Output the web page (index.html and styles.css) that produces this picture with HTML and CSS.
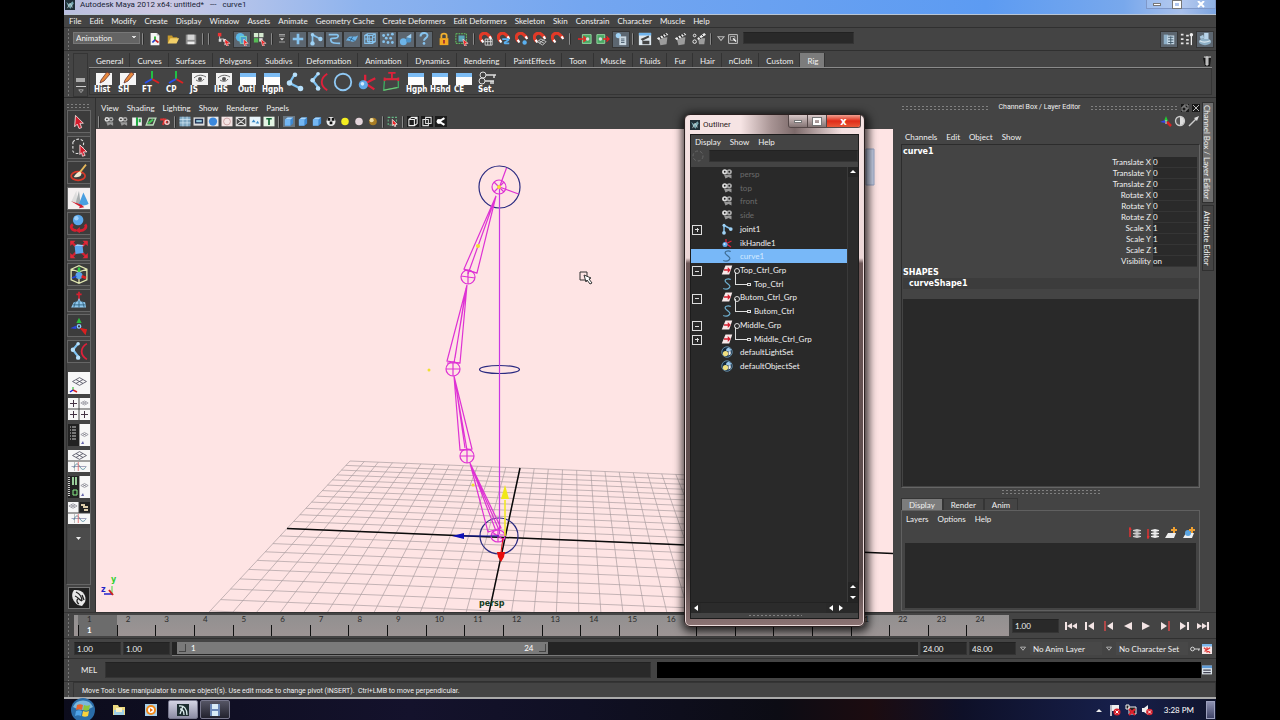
FILE: index.html
```html
<!DOCTYPE html>
<html lang="en">
<head>
<meta charset="utf-8">
<title>Autodesk Maya 2012 x64: untitled*</title>
<link rel="stylesheet" href="styles.css">
</head>
<body>
<svg class="sprite" aria-hidden="true">
  <symbol id="new" viewBox="0 0 16 16"><path d="M3 1h7l3 3v11H3z" fill="#f4f4f4"/><path d="M10 1v3h3" fill="#bbb"/><path d="M8 9V5" stroke="#2a2" stroke-width="2"/><path d="M8 9l4 3" stroke="#c22" stroke-width="2"/><path d="M8 9l-3 3" stroke="#24c" stroke-width="2"/></symbol>
  <symbol id="open" viewBox="0 0 16 16"><path d="M2 13V4h5l1 2h5v2" fill="#c79a2c"/><path d="M2 13l3-6h10l-3 6z" fill="#f3d069"/></symbol>
  <symbol id="save" viewBox="0 0 16 16"><path d="M2 3h12v11H2z" fill="#8b8b8b"/><path d="M4 3h8v6H4z" fill="#d5d5d5"/><path d="M4 11h8v3H4z" fill="#eee"/></symbol>
  <symbol id="sel-h" viewBox="0 0 16 16"><path d="M1 1h4v4H1z" fill="#e33"/><path d="M2 8h3v3H2zM7 8h3v3H7z" fill="#ddd"/><path d="M3 5v3h5" stroke="#ccc" fill="none"/><path d="M9 8l6 5-3 0 1 3-2 0-1-3-1 2z" fill="#e22" stroke="#fff" stroke-width=".6"/></symbol>
  <symbol id="sel-o" viewBox="0 0 16 16"><circle cx="6" cy="6" r="5" fill="#5ab8e8"/><path d="M6 5h7v8H6z" fill="#4a9fd0" stroke="#7fe0c0"/><path d="M10 8l5 5-3 0 1 3-2 0-1-3z" fill="#e22" stroke="#fff" stroke-width=".6"/></symbol>
  <symbol id="sel-c" viewBox="0 0 16 16"><path d="M1 1h5v5H1zM7 1h5v5H7z" fill="#d6ead0"/><path d="M1 7h5v5H1z" fill="#5b5"/><path d="M7 7h4v4H7z" fill="#ddd"/><path d="M9 8l6 5-3 0 1 3-2 0-1-3z" fill="#e22" stroke="#fff" stroke-width=".6"/></symbol>
  <symbol id="drop" viewBox="0 0 16 16"><path d="M4 2h8M4 4h8M4 12h8" stroke="#bbb"/><path d="M5 7h6l-3 3z" fill="#ddd"/></symbol>
  <symbol id="plus" viewBox="0 0 16 16"><path d="M8 2v12M2 8h12" stroke="#86c3ee" stroke-width="3"/></symbol>
  <symbol id="m-joint" viewBox="0 0 16 16"><path d="M4 13V3l9 5" stroke="#86c3ee" stroke-width="2" fill="none"/><circle cx="4" cy="3" r="2" fill="#9fd2f5"/><circle cx="4" cy="13" r="2.500" fill="#9fd2f5"/><circle cx="13" cy="8" r="2.500" fill="#9fd2f5"/></symbol>
  <symbol id="m-curve" viewBox="0 0 16 16"><path d="M2 3h9c3 0 2 4-1 4-5 0-7 0-5 4 1 2 5 2 10 2" stroke="#86c3ee" stroke-width="2" fill="none"/></symbol>
  <symbol id="m-surf" viewBox="0 0 16 16"><path d="M1 10c3-5 4-5 6-5s4 1 8-1c-2 5-3 7-6 7s-5-2-8-1z" fill="#6db4e8"/><path d="M4 7l7 3M9 5L6 10" stroke="#2d5f86"/></symbol>
  <symbol id="m-lat" viewBox="0 0 16 16"><path d="M2 4h9v9H2zM5 2h9v9H5zM2 8h9M7 4v9M11 6h3M5 2L2 4M14 2l-3 2M14 11l-3 2" stroke="#86c3ee" fill="none" stroke-width="1.300"/></symbol>
  <symbol id="m-dyn" viewBox="0 0 16 16"><g fill="#86c3ee"><circle cx="3" cy="4" r="1.600"/><circle cx="8" cy="3" r="1.400"/><circle cx="13" cy="2.500" r="1.600"/><circle cx="6" cy="7" r="1.600"/><circle cx="11" cy="7" r="1.600"/><circle cx="3" cy="11" r="1.600"/><circle cx="8" cy="12" r="1.600"/><circle cx="13" cy="12" r="1.600"/></g></symbol>
  <symbol id="m-ren" viewBox="0 0 16 16"><circle cx="5" cy="11" r="4" fill="#6db4e8"/><circle cx="11" cy="9" r="3" fill="#4d93c8"/><path d="M8 6l6-4v5z" fill="#9fd2f5"/></symbol>
  <symbol id="m-q" viewBox="0 0 16 16"><path d="M4 5c0-5 8-5 8-1 0 3-4 3-4 6" stroke="#86c3ee" stroke-width="2.200" fill="none"/><circle cx="8" cy="13" r="1.500" fill="#86c3ee"/></symbol>
  <symbol id="lock" viewBox="0 0 16 16"><path d="M5 7V4c0-3 6-3 6 0v3" stroke="#f0b030" stroke-width="2" fill="none"/><path d="M3 7h10v8H3z" fill="#f2a822"/><path d="M8 9v4" stroke="#803" stroke-width="1.500"/></symbol>
  <symbol id="hilite" viewBox="0 0 16 16"><path d="M1 2h12v11H1z" fill="none" stroke="#6d6" stroke-dasharray="2 1"/><path d="M4 4h7v7H4z" fill="#5aa7b8"/><path d="M9 8l6 5-3 0 1 3-2 0-1-3z" fill="#e22" stroke="#fff" stroke-width=".6"/></symbol>
  <symbol id="mag" viewBox="0 0 16 16"><path d="M4 11L2 8C0 3 6-1 10 3l4 4" stroke="#e23a28" stroke-width="3.500" fill="none"/><path d="M3 9l2 3M12 5l2 3" stroke="#fff" stroke-width="2.500"/></symbol>
  <symbol id="grid" viewBox="0 0 16 16"><path d="M7 8h8v7H7zM7 11h8M10 8v7M13 8v7" stroke="#ddd" fill="none"/></symbol>
  <symbol id="cplay" viewBox="0 0 16 16"><path d="M6 8h7c2 2-6 3-4 5h5" stroke="#5ab0f0" stroke-width="2" fill="none"/></symbol>
  <symbol id="dot" viewBox="0 0 16 16"><circle cx="11" cy="12" r="2.500" fill="#5ab0f0"/></symbol>
  <symbol id="plane" viewBox="0 0 16 16"><path d="M5 11l4-3 6 3-4 4z M7 10l6 3M7 13l5-4" stroke="#ccc" fill="none"/></symbol>
  <symbol id="hin" viewBox="0 0 16 16"><path d="M5 3h10v10H5z" fill="#4aa865" stroke="#9be0a8"/><path d="M0 8h8M6 5l4 3-4 3" stroke="#e22" stroke-width="1.600" fill="none"/><circle cx="11" cy="8" r="2" fill="#ddd"/></symbol>
  <symbol id="hout" viewBox="0 0 16 16"><path d="M1 3h9v10H1z" fill="#4aa865" stroke="#9be0a8"/><circle cx="5" cy="8" r="2" fill="#ddd"/><path d="M8 8h7M12 5l3 3-3 3" stroke="#e22" stroke-width="1.600" fill="none"/></symbol>
  <symbol id="hist" viewBox="0 0 16 16"><circle cx="5" cy="4" r="3" fill="#9fd2f5"/><path d="M6 5h8v10H6z" fill="#c8d6e0"/><path d="M8 8h4M8 10h4M8 12h4" stroke="#456"/></symbol>
  <symbol id="clapw" viewBox="0 0 16 16"><path d="M1 1h14v14H1z" fill="#dfe8ef"/><path d="M1 1h14v3H1z" fill="#6fb4ee"/><path d="M3 8l9-4 1 2-8 4zM5 10h8v4H5z" fill="#444"/></symbol>
  <symbol id="clap" viewBox="0 0 16 16"><path d="M3 7l10-1-1 8-7 1z" fill="#9c9c9c"/><path d="M1 7l11-6 2 2-11 6z" fill="#eee"/><path d="M4 5l2 3M7 3l2 3M10 2l2 2" stroke="#222" stroke-width="1.300"/></symbol>
  <symbol id="claps" viewBox="0 0 16 16"><path d="M7 7h8l-1 7H8z" fill="#9c9c9c"/><path d="M6 7l8-6 2 2-9 6z" fill="#eee"/><path d="M8 5l2 3M11 3l2 2" stroke="#222"/><circle cx="3" cy="4" r="1.500" fill="none" stroke="#fff"/><circle cx="3" cy="11" r="2" fill="none" stroke="#fff"/></symbol>
  <symbol id="tri" viewBox="0 0 16 16"><path d="M4 5h8l-4 5z" fill="none" stroke="#bbb" stroke-width="1.400"/></symbol>
  <symbol id="inbox" viewBox="0 0 16 16"><path d="M1 1h14v14H1z" fill="none" stroke="#ccc" stroke-width="1.500"/><path d="M4 4h7v6H4z" fill="none" stroke="#ddd"/><path d="M8 7l5 5" stroke="#fff" stroke-width="2"/></symbol>
  <symbol id="attr" viewBox="0 0 16 16"><path d="M2 3h5v11H2z" fill="#8fb0c8"/><path d="M6 4h8v10H6z" fill="#c4d8e6"/><path d="M7 6h6M7 9h6M7 12h6M10 5v9" stroke="#3c5566"/></symbol>
  <symbol id="tools" viewBox="0 0 16 16"><path d="M1 3h4M1 8h4M1 13h4M7 4h4M7 9h3M7 13h4" stroke="#e4e4e4" stroke-width="2" stroke-dasharray="3 1"/><path d="M13 4v11" stroke="#eee" stroke-width="1.500"/><circle cx="13" cy="3" r="2" fill="#eee"/></symbol>
  <symbol id="layers" viewBox="0 0 16 16"><ellipse cx="8" cy="11" rx="7" ry="4" fill="#8fb0c6"/><path d="M7 1h5v7H7z" fill="#b8d4ea"/><path d="M2 5l4-2 1 4-4 1z" fill="#a9c8de"/><path d="M2 10c3 2 7 2 12 0" stroke="#dbe8f0" fill="none" stroke-width="1.500"/></symbol>

  <symbol id="note" viewBox="0 0 20 14"><path d="M2 2h16v12H2z" fill="#f6f6f6"/><path d="M7 9l6-8 3 2-6 7-4 2z" fill="#e8883a" stroke="#633" stroke-width=".8"/></symbol>
  <symbol id="axis" viewBox="0 0 20 14"><path d="M10 8V0" stroke="#22c044" stroke-width="2"/><path d="M10 8l7 4" stroke="#e02020" stroke-width="2"/><path d="M10 8l-7 4" stroke="#2850f0" stroke-width="2"/></symbol>
  <symbol id="eye" viewBox="0 0 20 14"><path d="M2 2h16v12H2z" fill="#f2f2f2"/><path d="M4 7c4-4 9-3 12-1M6 9c3 2 6 2 8-1" stroke="#666" fill="none"/><circle cx="10" cy="8" r="2" fill="#555"/></symbol>
  <symbol id="win" viewBox="0 0 20 14"><path d="M2 2h16v12H2z" fill="#fdfdfd"/><path d="M2 2h16v4H2z" fill="#7cbcf4"/></symbol>
  <symbol id="keys" viewBox="0 0 20 14"><circle cx="5" cy="4" r="3" fill="none" stroke="#ddd"/><circle cx="4" cy="10" r="3" fill="none" stroke="#ddd"/><path d="M8 4h10M7 10h9M16 4v3M13 10v3M15 10v3" stroke="#ddd" stroke-width="1.500"/></symbol>
  <symbol id="joint" viewBox="0 0 24 24"><path d="M12 3L6 13l12 6" stroke="#7fc4f4" stroke-width="2.500" fill="none"/><g fill="#b8e0fb"><circle cx="12" cy="4" r="2.500"/><circle cx="6" cy="13" r="3"/><circle cx="18" cy="19" r="3"/></g></symbol>
  <symbol id="spline" viewBox="0 0 24 24"><path d="M11 3L5 10l7 9" stroke="#7fc4f4" stroke-width="2.500" fill="none"/><g fill="#b8e0fb"><circle cx="11" cy="3" r="2"/><circle cx="5" cy="10" r="2.500"/><circle cx="11" cy="19" r="2.500"/></g><path d="M21 3c-8 5-8 13 0 18" stroke="#e0203a" stroke-width="2" fill="none"/></symbol>
  <symbol id="circ" viewBox="0 0 24 24"><circle cx="12" cy="12" r="9" fill="none" stroke="#8fc8f4" stroke-width="2"/></symbol>
  <symbol id="ik" viewBox="0 0 24 24"><path d="M11 13l10-5M11 14l9 6M10 4l0 8" stroke="#e0203a" stroke-width="2.500"/><circle cx="8" cy="15" r="5" fill="#5fa8e8"/><circle cx="7" cy="14" r="2" fill="#cfeaff"/></symbol>
  <symbol id="latt" viewBox="0 0 24 24"><path d="M5 9h15v9L4 21z" stroke="#3fa860" stroke-width="1.500" fill="none"/><path d="M9 2h8M13 2v7M5 9h15M5 7v4M20 7v4" stroke="#e0203a" stroke-width="2"/><path d="M4 21l15-3" stroke="#7ac87a"/></symbol>

  <symbol id="arrow" viewBox="0 0 24 24"><path d="M8 5l9 9-4 0 2 5-3 1-2-5-3 3z" fill="#d41c2c" stroke="#f6dada"/></symbol>
  <symbol id="lasso" viewBox="0 0 24 24"><path d="M5 6c4-6 14-4 12 3l-2 8c-5 4-12 1-10-4z" stroke="#ddd" stroke-dasharray="3 2" fill="none" stroke-width="1.300"/><path d="M13 9l8 8-4 0 2 4-3 1-1-4-2 2z" fill="#d41c2c" stroke="#f6dada"/></symbol>
  <symbol id="paint" viewBox="0 0 24 24"><ellipse cx="11" cy="16" rx="8" ry="5" fill="none" stroke="#d83a2a" stroke-width="2"/><path d="M20 3l-8 10" stroke="#e8b95c" stroke-width="2"/><path d="M13 11c-3 0-5 3-7 6 4 1 8 0 9-4z" fill="#f2ead0"/></symbol>
  <symbol id="move" viewBox="0 0 24 24"><path d="M9 3L3 16h7z" fill="#ddd"/><path d="M12 3L8 18l6 1z" fill="#a8aeb0"/><path d="M17 5l-5 13c3 3 8 2 11 0z" fill="#4a9fe0"/><path d="M3 15l10 6-1 2 6-1-3-3" fill="#d42030"/></symbol>
  <symbol id="rot" viewBox="0 0 24 24"><circle cx="11" cy="8" r="6" fill="#5aa8ec"/><circle cx="9" cy="6" r="2.500" fill="#9fd0fa"/><path d="M5 13c-4 3-1 7 4 7M19 13c3 4-2 8-7 7" stroke="#d42030" stroke-width="3" fill="none"/><path d="M13 16v7l-5-3z" fill="#d42030"/></symbol>
  <symbol id="scale" viewBox="0 0 24 24"><path d="M3 3l18 18M21 3L3 21" stroke="#d42030" stroke-width="2.500"/><path d="M2 2h6L2 8zM22 2v6l-6-6zM2 22v-6l6 6zM22 22h-6l6-6z" fill="#e02838"/><path d="M7 8l9-1 1 9-9 1z" fill="#5aa4ea"/><path d="M7 8l3-2 8 1-2 1z" fill="#9fd0fa"/></symbol>
  <symbol id="univ" viewBox="0 0 24 24"><path d="M3 6l9-4 9 4v12l-9 4-9-4zM3 6l9 3 9-3M12 9v13" stroke="#e0e6b0" stroke-width="1.500" fill="none"/><circle cx="12" cy="13" r="4" fill="#5aa4ea"/><path d="M12 9V4" stroke="#3c4" stroke-width="3"/><path d="M15 14l5 2" stroke="#d22" stroke-width="3"/><path d="M9 14l-5 2" stroke="#24d" stroke-width="2"/></symbol>
  <symbol id="soft" viewBox="0 0 24 24"><path d="M12 2v11M9 5h6" stroke="#d42030" stroke-width="2"/><path d="M3 20l3-6 4-1 2-4 2 4 5 1 1 6z" fill="#8fc8ee"/><path d="M5 17h14M8 13l-2 7M12 12v8M16 13l2 7" stroke="#2f617f"/></symbol>
  <symbol id="manip" viewBox="0 0 24 24"><circle cx="12" cy="13" r="2" fill="none" stroke="#8cf" stroke-width="1.500"/><path d="M12 3l3 6H9z" fill="#2fbf3f"/><path d="M2 15l7-3v4z" fill="#2a48e0"/><path d="M15 16l4 5 1-4z" fill="#d82020" stroke="#d82020" stroke-width="2"/></symbol>

  <symbol id="pl" viewBox="0 0 22 12"><path d="M11 1l9 5-9 5-9-5zM6.500 3.500l9 5M15.500 3.500l-9 5" fill="none" stroke="#445" stroke-width="1"/></symbol>
  <symbol id="wave" viewBox="0 0 22 12"><path d="M5 0v12" stroke="#aaa"/><path d="M1 6h20" stroke="#88a"/><path d="M4 8c3-7 5-7 8-2s5 5 8 1" fill="none" stroke="#3a7a90"/><path d="M10 0v12" stroke="#d55"/></symbol>
  <symbol id="cam" viewBox="0 0 16 16"><circle cx="5" cy="5" r="3.500" fill="#ddd"/><circle cx="11" cy="5" r="3.500" fill="#aaa"/><circle cx="5" cy="5" r="1.200" fill="#222"/><circle cx="11" cy="5" r="1.200" fill="#222"/><path d="M4 9h10v5l-4-2-4 2z" fill="#999"/></symbol>
  <symbol id="cube" viewBox="0 0 16 16"><path d="M2 5l4-3h8v9l-4 3H2z" fill="#3f88d0"/><path d="M2 5l4-3h8l-4 3z" fill="#a8d8ff"/><path d="M2 5h8v9H2z" fill="#74b6f2"/></symbol>
  <symbol id="cubeo" viewBox="0 0 16 16"><path d="M2 5l4-3h8v9l-4 3H2zM2 5h8v9M10 5l4-3" fill="none" stroke="#eee" stroke-width="1.500"/></symbol>
  <symbol id="file" viewBox="0 0 16 16"><path d="M6 2h9l-4 12H1z" fill="#f8eaea"/><path d="M4 7h5V4l4 4-4 4V9H4z" fill="#d42030"/></symbol>
  <symbol id="crv" viewBox="0 0 16 16"><path d="M13 2C9 0 4 2 6 5s8 5 5 8-8 1-8 1" fill="none" stroke="#6fb0d0" stroke-width="1.600"/></symbol>
  <symbol id="crv-sel" viewBox="0 0 16 16"><path d="M13 2C9 0 4 2 6 5s8 5 5 8-8 1-8 1" fill="none" stroke="#3f6d94" stroke-width="1.600"/></symbol>
  <symbol id="set" viewBox="0 0 16 16"><circle cx="8" cy="8" r="7" fill="#14283c" stroke="#78a8c8"/><path d="M7 7h5l2-2-4-3-3 2z" fill="#9cc8ec"/><path d="M10 7h3v4l-3 2z" fill="#e8eef4"/><circle cx="6" cy="10" r="3.500" fill="#f0e080"/></symbol>
  <symbol id="m" viewBox="0 0 16 16"><path d="M0 0h16v16H0z" fill="#203038"/><path d="M2 3l5 4 5-5 2 3-5 9-4-4z" fill="#78a8b0"/><path d="M4 13l4-8 4 7" stroke="#e6f2f2" fill="none"/></symbol>
</svg>

<div class="app">
  <header class="titlebar">
    <svg class="i10"><use href="#m"/></svg><h1>Autodesk Maya 2012 x64: untitled* &nbsp; --- &nbsp; curve1</h1>
    <div class="caption"><button aria-label="Minimize"><i class="min"></i></button><button aria-label="Restore"><i class="max"></i></button><button class="x" aria-label="Close"><svg viewBox="0 0 8 7"><path d="M1 0l6 6M7 0L1 6" stroke="#fff" stroke-width="2"/></svg></button></div>
  </header>

  <nav class="menubar main-menu"><button>File</button><button>Edit</button><button>Modify</button><button>Create</button><button>Display</button><button>Window</button><button>Assets</button><button>Animate</button><button>Geometry Cache</button><button>Create Deformers</button><button>Edit Deformers</button><button>Skeleton</button><button>Skin</button><button>Constrain</button><button>Character</button><button>Muscle</button><button>Help</button></nav>

  <div class="status">
    <i class="grip"></i>
    <select aria-label="Menu set"><option>Animation</option></select>
    <i class="sep"></i>
    <button aria-label="New"><svg><use href="#new"/></svg></button><button aria-label="Open"><svg><use href="#open"/></svg></button><button aria-label="Save"><svg><use href="#save"/></svg></button>
    <i class="sep"></i><i class="sep wide"></i>
    <button aria-label="By hierarchy"><svg><use href="#sel-h"/></svg></button><button class="on" aria-label="By object"><svg><use href="#sel-o"/></svg></button><button aria-label="By component"><svg><use href="#sel-c"/></svg></button>
    <i class="sep"></i>
    <button class="slim" aria-label="Masks"><svg><use href="#drop"/></svg></button>
    <button class="on" aria-label="Handles"><svg><use href="#plus"/></svg></button><button class="on" aria-label="Joints"><svg><use href="#m-joint"/></svg></button><button class="on" aria-label="Curves"><svg><use href="#m-curve"/></svg></button><button class="on" aria-label="Surfaces"><svg><use href="#m-surf"/></svg></button><button class="on" aria-label="Deformers"><svg><use href="#m-lat"/></svg></button><button class="on" aria-label="Dynamics"><svg><use href="#m-dyn"/></svg></button><button class="on" aria-label="Rendering"><svg><use href="#m-ren"/></svg></button><button class="on" aria-label="Misc"><svg><use href="#m-q"/></svg></button>
    <button class="lock" aria-label="Lock"><svg><use href="#lock"/></svg></button><button aria-label="Highlight"><svg><use href="#hilite"/></svg></button>
    <i class="sep"></i>
    <button aria-label="Snap to grid"><svg><use href="#mag"/><use href="#grid"/></svg></button><button aria-label="Snap to curve"><svg><use href="#mag"/><use href="#cplay"/></svg></button><button aria-label="Snap to point"><svg><use href="#mag"/><use href="#dot"/></svg></button><button aria-label="Snap to plane"><svg><use href="#mag"/><use href="#plane"/></svg></button><button aria-label="Make live"><svg><use href="#mag"/></svg></button>
    <i class="sep wide"></i>
    <button aria-label="Inputs"><svg><use href="#hin"/></svg></button><button aria-label="Outputs"><svg><use href="#hout"/></svg></button><button class="on" aria-label="History"><svg><use href="#hist"/></svg></button>
    <i class="sep"></i>
    <button aria-label="Render view"><svg><use href="#clapw"/></svg></button><button aria-label="Render"><svg><use href="#clap"/></svg></button><button aria-label="IPR"><svg><use href="#clap"/></svg></button><button aria-label="Render settings"><svg><use href="#claps"/></svg></button>
    <i class="sep"></i>
    <button class="slim" aria-label="Input mode"><svg><use href="#tri"/></svg></button><svg class="i10"><use href="#inbox"/></svg>
    <input class="field quick" aria-label="Quick input">
    <div class="right"><button class="on" aria-label="Attribute editor"><svg><use href="#attr"/></svg></button><button aria-label="Tool settings"><svg><use href="#tools"/></svg></button><button class="on" aria-label="Channel box"><svg><use href="#layers"/></svg></button></div>
  </div>

  <div class="shelf">
    <i class="grip"></i>
    <div class="shelf-side"><i class="blk"></i><svg class="i10"><use href="#tri"/></svg></div>
    <div class="shelf-main">
      <div class="tabs"><button>General</button><button>Curves</button><button>Surfaces</button><button>Polygons</button><button>Subdivs</button><button>Deformation</button><button>Animation</button><button>Dynamics</button><button>Rendering</button><button>PaintEffects</button><button>Toon</button><button>Muscle</button><button>Fluids</button><button>Fur</button><button>Hair</button><button>nCloth</button><button>Custom</button><button class="sel">Rig</button><svg class="trash" viewBox="0 0 10 12"><path d="M1 3h8l-1 8H3z" fill="#151515"/><path d="M4 2h2v8H4zM2 2h7" stroke="#ccc" fill="#aaa"/></svg></div>
      <div class="shelf-items">
        <button><svg><use href="#note"/></svg>Hist</button><button><svg><use href="#note"/></svg>SH</button><button><svg><use href="#axis"/></svg>FT</button><button><svg><use href="#axis"/></svg>CP</button><button><svg><use href="#eye"/></svg>JS</button><button><svg><use href="#eye"/></svg>IHS</button><button><svg><use href="#win"/></svg>Outl</button><button><svg><use href="#win"/></svg>Hgph</button><button class="big" aria-label="Joint tool"><svg><use href="#joint"/></svg></button><button class="big" aria-label="IK spline"><svg><use href="#spline"/></svg></button><button class="big" aria-label="Circle"><svg><use href="#circ"/></svg></button><button class="big" aria-label="IK handle"><svg><use href="#ik"/></svg></button><button class="big" aria-label="Lattice"><svg><use href="#latt"/></svg></button><button><svg><use href="#win"/></svg>Hgph</button><button><svg><use href="#win"/></svg>Hshd</button><button><svg><use href="#win"/></svg>CE</button><button><svg><use href="#keys"/></svg>Set.</button>
      </div>
    </div>
  </div>

  <main class="work">
    <aside class="toolbox">
      <i class="dots"></i>
      <div class="tools">
        <div class="toolset">
          <button aria-label="Select"><svg><use href="#arrow"/></svg></button><button aria-label="Lasso"><svg><use href="#lasso"/></svg></button><button aria-label="Paint select"><svg><use href="#paint"/></svg></button><button class="sel" aria-label="Move"><svg><use href="#move"/></svg></button><button aria-label="Rotate"><svg><use href="#rot"/></svg></button><button aria-label="Scale"><svg><use href="#scale"/></svg></button><button aria-label="Universal"><svg><use href="#univ"/></svg></button><button aria-label="Soft modification"><svg><use href="#soft"/></svg></button><button aria-label="Show manipulator"><svg><use href="#manip"/></svg></button><button aria-label="Last tool"><svg><use href="#spline"/></svg></button>
        </div>
        <div class="layouts">
          <button aria-label="Single view"><svg viewBox="0 0 22 22"><path d="M0 0h22v22H0z" fill="#f7f7f7"/><use href="#pl" x="3" y="4" width="17" height="11"/><path d="M5 19v-4" stroke="#2b2"/><path d="M5 18l4 2" stroke="#d22" stroke-width="1.500"/><path d="M5 18l-3 2" stroke="#22d" stroke-width="1.500"/></svg></button>
          <button aria-label="Four views"><svg viewBox="0 0 22 22"><path d="M0 0h10.500v10.500H0zM11.500 0H22v10.500H11.500zM0 11.500h10.500V22H0zM11.500 11.500H22V22H11.500z" fill="#f7f7f7"/><path d="M5.500 2v7M2 5.500h7M5.500 13v7M2 16.500h7M16.500 13v7M13 16.500h7" stroke="#434"/><use href="#pl" x="12" y="2" width="9" height="6"/></svg></button>
          <button aria-label="Outliner and view"><svg viewBox="0 0 22 22"><path d="M0 0h11v22H0z" fill="#222"/><path d="M2 3h6M2 6h7M2 9h6M2 12h7M2 15h6" stroke="#ccc" stroke-dasharray="1 1 4 1"/><path d="M11.500 0H22v22H11.500z" fill="#f7f7f7"/><use href="#pl" x="12" y="7" width="9" height="7"/><path d="M13 20l2-3 1 3z" fill="#66a"/></svg></button>
          <button aria-label="View and graph"><svg viewBox="0 0 22 22"><path d="M0 0h22v10.500H0zM0 11.500h22V22H0z" fill="#f7f7f7"/><use href="#pl" x="3" width="17" height="11"/><use href="#wave" y="12" width="22" height="9"/></svg></button>
          <button aria-label="Hypershade and view"><svg viewBox="0 0 22 22"><path d="M0 0h11v22H0z" fill="#222"/><path d="M1 1v20" stroke="#ccc" stroke-width="2" stroke-dasharray="1 1"/><path d="M4 1h2v8H4zM7 1h2v8H7z" fill="#9c9"/><path d="M5 14h4v5H5z" fill="none" stroke="#8e8"/><path d="M11.500 0H22v22H11.500z" fill="#f7f7f7"/><use href="#pl" x="12" y="6" width="9" height="7"/><path d="M13 20l2-3 1 3z" fill="#66a"/></svg></button>
          <button aria-label="View, hypergraph, graph"><svg viewBox="0 0 22 22"><path d="M0 0h10.500v10.500H0zM0 11.500h22V22H0z" fill="#f7f7f7"/><path d="M11.500 0H22v10.500H11.500z" fill="#222"/><use href="#pl" y="1" width="10" height="6"/><path d="M13 3h4M15 5h5M16 8h4" stroke="#dca" stroke-width="2"/><use href="#wave" y="12" width="22" height="9"/></svg></button>
          <button class="more" aria-label="More layouts"><svg viewBox="0 0 22 22"><path d="M8 9h5l-2.500 3z" fill="#eee"/></svg></button>
        </div>
      </div>
      <button class="logo" aria-label="Maya"><svg viewBox="0 0 20 20"><path d="M0 0h20v20H0z" fill="#202020"/><path d="M5 2c9-1 13 6 11 12l-3 4-4-1C4 14 1 7 5 2z" fill="#e8e8e8"/><path d="M7 4c4 2 6 6 6 9M6 8c3 1 4 4 7 5M9 11c-2 1-1 4 1 5M13 7l2 5" stroke="#222" stroke-width="1.300" fill="none"/></svg></button>
    </aside>

    <section class="view">
      <nav class="menubar"><button>View</button><button>Shading</button><button>Lighting</button><button>Show</button><button>Renderer</button><button>Panels</button></nav>
      <div class="viewbar">
        <i class="sep"></i>
        <svg><use href="#cam"/></svg><svg><use href="#cam"/></svg><svg viewBox="0 0 16 16"><path d="M1 2h6v12H1zM9 2h6v12H9z" fill="#f2f2f2"/><path d="M8 2v12M12 4v5" stroke="#2a4" stroke-width="3"/></svg><svg viewBox="0 0 16 16"><path d="M5 3h10l-4 10H1z" fill="none" stroke="#bdb" stroke-width="2"/><path d="M4 11l7-6" stroke="#4c5" stroke-width="3"/></svg><svg viewBox="0 0 16 16"><path d="M1 5h7l-3 8M5 4l6 6" stroke="#d33" stroke-width="3" fill="none"/><circle cx="11" cy="9" r="3" fill="none" stroke="#fcc" stroke-width="2"/></svg>
        <i class="sep"></i>
        <svg viewBox="0 0 16 16"><path d="M0 1h16v14H0z" fill="#7ea6c0"/><path d="M0 5h16M0 10h16M5 1v14M11 1v14" stroke="#d8ecf8"/></svg><svg viewBox="0 0 16 16"><path d="M0 2h16v12H0z" fill="#ddd"/><path d="M2 4h12v7H2z" fill="#235"/><path d="M4 6h8v3H4z" fill="#9cd"/></svg><svg viewBox="0 0 16 16"><path d="M0 1h16v14H0z" fill="#e8e8e8"/><circle cx="8" cy="8" r="6" fill="#3b88dc"/></svg><svg viewBox="0 0 16 16"><path d="M0 1h16v14H0z" fill="#f4e4e4"/><circle cx="8" cy="8" r="5" fill="none" stroke="#b88"/></svg><svg viewBox="0 0 16 16"><path d="M1 2h14v12H1zM1 2l14 12M15 2L1 14" fill="none" stroke="#ddd" stroke-width="1.500"/></svg><svg viewBox="0 0 16 16"><path d="M0 1h16v14H0z" fill="#e8f4fa"/><path d="M3 9l3-4 3 4zM9 11l3-4 2 4z" fill="#3a8ac8"/></svg><svg viewBox="0 0 16 16"><path d="M0 1h16v14H0z" fill="#e4f4e4"/><path d="M4 4h8M8 4v9" stroke="#163" stroke-width="2.500"/></svg>
        <i class="sep"></i>
        <svg class="lit"><use href="#cube"/></svg><svg><use href="#cube"/></svg><svg><use href="#cube"/></svg><svg viewBox="0 0 16 16"><circle cx="8" cy="8" r="6.500" fill="#eee"/><path d="M3 3h4v4H3zM9 3h4v4H9zM6 8h4v4H6z" fill="#111"/></svg><svg viewBox="0 0 16 16"><circle cx="8" cy="8" r="5.500" fill="#f4ee20"/></svg><svg viewBox="0 0 16 16"><circle cx="8" cy="8" r="5.500" fill="#e4d4da"/></svg><svg viewBox="0 0 16 16"><circle cx="8" cy="8" r="5.500" fill="#a87c24"/><circle cx="6" cy="6" r="3" fill="#f0dca0"/></svg>
        <i class="sep"></i>
        <svg viewBox="0 0 16 16"><path d="M1 2h12v11H1z" fill="none" stroke="#6b8" stroke-dasharray="3 2" stroke-width="1.500"/><path d="M7 5l7 7-3 0 1 3-2 0-1-3-2 2z" fill="#e22" stroke="#fff"/></svg>
        <i class="sep"></i>
        <svg class="dk"><use href="#cubeo"/></svg><svg class="dk" viewBox="0 0 16 16"><path d="M2 5h8v9H2zM6 2h8v9H6z" fill="none" stroke="#ddd" stroke-width="1.500"/></svg><svg class="dk" viewBox="0 0 16 16"><path d="M13 3L5 8l8 5" stroke="#fff" stroke-width="3" fill="none"/><circle cx="5" cy="8" r="3.500" fill="#fff"/></svg>
      </div>
      <svg class="scene" viewBox="96 129 797 484" preserveAspectRatio="xMinYMin slice">
        <path id="floor" fill="none" stroke="#ab9da0" stroke-width=".7"/>
        <path d="M287 528.500L893 553.500M520 468L489 613" stroke="#0a0a0a" stroke-width="1.500"/>
        <g fill="none" stroke="#2a2a80" stroke-width="1.200"><ellipse cx="499.500" cy="187" rx="20.500" ry="21"/><ellipse cx="499.500" cy="369.500" rx="20" ry="4"/><ellipse cx="499" cy="536" rx="19" ry="18"/></g>
        <g fill="none" stroke="#de32d4" stroke-width="1.200">
          <path d="M499.500 187V534" stroke="#c838e4"/>
          <path d="M499.500 187l7-19M499.500 187l19 7"/>
          <circle cx="499" cy="187" r="7"/><path d="M494 182l10 10M504 182l-10 10"/>
          <path d="M496 196L464 269l13 4zM496 196l-28 78"/>
          <circle cx="468" cy="277" r="7"/><path d="M461 276l14 2M468 270v14M464 270l13 3"/>
          <path d="M467 285l-20 76 13 2zM467 285l-13 78M466 288l-11 70"/>
          <circle cx="453" cy="369" r="7"/><path d="M446 369h14M453 362v14M447 363h13"/>
          <path d="M454 376l6 74 12-1zM454 376l13 74M455 380l10 68"/>
          <circle cx="467" cy="456" r="7"/><path d="M460 456h14M467 449v14M460 450h12"/>
          <path d="M470 463l18 69 13-4zM470 463l26 68M472 468l27 62"/>
          <ellipse cx="498" cy="536" rx="7" ry="6"/><path d="M491 535h14M498 530v12M492 532l12 8"/>
        </g>
        <path d="M505 500v36" stroke="#f0e818" stroke-width="1.500"/><path d="M505 485l4 14h-8z" fill="#f0e818"/>
        <path d="M464 536h35" stroke="#1018b0"/><path d="M452 536l12-3v6z" fill="#1010b8"/>
        <path d="M503 538l-2 14" stroke="#e01010"/><path d="M497 552l8 0-1 5-3 5-3-5z" fill="#e80c0c"/>
        <g fill="#f0e030"><circle cx="499" cy="187" r="2"/><circle cx="478" cy="246" r="2"/><circle cx="429" cy="370" r="1.500"/><circle cx="473" cy="485" r="1.500"/></g>
        <g stroke="#333" fill="none"><path d="M580 272h7v8h-7z"/><path d="M584 275l7 3-2 1 3 4-2 1-3-4-1 2z" fill="#fff"/></g>
        <path d="M112 594h-8" stroke="#22c" stroke-width="1.500"/><path d="M112 594v-8" stroke="#4d4"/><path d="M109 590l4 5" stroke="#c22" stroke-width="2"/>
        <text class="ax-z" x="101" y="592">z</text><text class="ax-y" x="111" y="582">y</text>
        <text class="cam-name" x="479" y="606">persp</text>
        <path d="M866 149h8v36h-8z" fill="#cdd6ee" stroke="#9aa8c8"/>
      </svg>
    </section>

    <aside class="channel">
      <div class="dock-title"><i class="dots"></i><h2>Channel Box / Layer Editor</h2><i class="dots"></i><button aria-label="Float"><svg viewBox="0 0 8 8"><path d="M1 3h4v4H1zM3 3V1h4v4H5" fill="none" stroke="#999"/></svg></button><button aria-label="Close"><svg viewBox="0 0 8 8"><path d="M1 1l6 6M7 1L1 7" stroke="#bbb"/></svg></button></div>
      <div class="chan-icons"><svg viewBox="0 0 12 12"><path d="M6 1l2 5H4z" fill="#2c3"/><path d="M0 7l5-2v3z" fill="#34e"/><path d="M7 7l4 4" stroke="#d22" stroke-width="2.500"/><path d="M6 5v4" stroke="#ddd"/></svg><svg viewBox="0 0 12 12"><circle cx="6" cy="6" r="4.500" fill="#555" stroke="#ccc" stroke-width="1.300"/><path d="M6 2a4 4 0 010 8z" fill="#ddd"/></svg><svg viewBox="0 0 12 12"><path d="M1 11l7-7" stroke="#ccc" stroke-width="1.500"/><path d="M11 1L9 6 6 3z" fill="#ddd"/></svg></div>
      <nav class="menubar"><button>Channels</button><button>Edit</button><button>Object</button><button>Show</button></nav>
      <div class="chan-box">
        <h3>curve1</h3>
        <div class="attrs">
          <label for="tx">Translate X</label><input id="tx" value="0"><label for="ty">Translate Y</label><input id="ty" value="0"><label for="tz">Translate Z</label><input id="tz" value="0"><label for="rx">Rotate X</label><input id="rx" value="0"><label for="ry">Rotate Y</label><input id="ry" value="0"><label for="rz">Rotate Z</label><input id="rz" value="0"><label for="sx">Scale X</label><input id="sx" value="1"><label for="sy">Scale Y</label><input id="sy" value="1"><label for="sz">Scale Z</label><input id="sz" value="1"><label for="vis">Visibility</label><input id="vis" value="on">
        </div>
        <h3>SHAPES</h3><h3 class="shape">curveShape1</h3>
        <div class="empty"></div>
      </div>
      <i class="dots grip-h"></i>
      <div class="layer-tabs"><button class="sel">Display</button><button>Render</button><button>Anim</button></div>
      <div class="layer-box">
        <nav class="menubar"><button>Layers</button><button>Options</button><button>Help</button></nav>
        <div class="layer-icons">
          <svg viewBox="0 0 12 12"><path d="M1 10V1M0 3l1-2 1 2" stroke="#d33" stroke-width="1.500"/><path d="M4 3l4-1 4 1v1l-4 1-4-1zM4 6l4-1 4 1v1l-4 1-4-1zM4 9l4-1 4 1v1l-4 1-4-1z" fill="#ccc"/></svg><svg viewBox="0 0 12 12"><path d="M1 2v9M0 9l1 2 1-2" stroke="#d33" stroke-width="1.500"/><path d="M4 3l4-1 4 1v1l-4 1-4-1zM4 6l4-1 4 1v1l-4 1-4-1zM4 9l4-1 4 1v1l-4 1-4-1z" fill="#eee"/></svg><svg viewBox="0 0 12 12"><path d="M3 6h8l-2 5H0z" fill="#eee"/><path d="M9 0v6M6 3h6" stroke="#f0a030" stroke-width="2"/></svg><svg viewBox="0 0 12 12"><path d="M3 6h8l-2 5H0z" fill="#eee"/><circle cx="5" cy="6" r="3" fill="#5aa4e0"/><path d="M9 0v6M6 3h6" stroke="#f0a030" stroke-width="2"/></svg>
        </div>
        <div class="layer-list"></div>
      </div>
    </aside>

    <div class="side-tabs"><button class="sel">Channel Box / Layer Editor</button><button>Attribute Editor</button></div>
  </main>

  <div class="time">
    <i class="grip"></i>
    <ol class="ticks"><li class="now">1<b>1</b></li><li>2</li><li>3</li><li>4</li><li>5</li><li>6</li><li>7</li><li>8</li><li>9</li><li>10</li><li>11</li><li>12</li><li>13</li><li>14</li><li>15</li><li>16</li><li>17</li><li>18</li><li>19</li><li>20</li><li>21</li><li>22</li><li>23</li><li>24</li></ol>
    <input class="field num" value="1.00" aria-label="Current time">
    <div class="play">
      <button aria-label="Go to start"><svg viewBox="0 0 14 10"><path d="M2 1v8" stroke="#f3e4e4" stroke-width="2"/><path d="M8 2v6L3 5zM13 2v6L8 5z"/></svg></button><button aria-label="Step back"><svg viewBox="0 0 14 10"><path d="M3 1v8" stroke="#f3e4e4" stroke-width="2"/><path d="M11 1v8L5 5z"/></svg></button><button aria-label="Previous key"><svg viewBox="0 0 14 10"><path d="M3 0v10" stroke="#b04848" stroke-width="2"/><path d="M11 1v8L5 5z"/></svg></button><button aria-label="Play backwards"><svg viewBox="0 0 14 10"><path d="M11 1v8L3 5z"/></svg></button><button aria-label="Play"><svg viewBox="0 0 14 10"><path d="M3 1v8l8-4z"/></svg></button><button aria-label="Next key"><svg viewBox="0 0 14 10"><path d="M11 0v10" stroke="#b04848" stroke-width="2"/><path d="M3 1v8l6-4z"/></svg></button><button aria-label="Step forward"><svg viewBox="0 0 14 10"><path d="M11 1v8" stroke="#f3e4e4" stroke-width="2"/><path d="M3 1v8l6-4z"/></svg></button><button aria-label="Go to end"><svg viewBox="0 0 14 10"><path d="M12 1v8" stroke="#f3e4e4" stroke-width="2"/><path d="M1 2v6l5-3zM6 2v6l5-3z"/></svg></button>
    </div>
  </div>

  <div class="range">
    <i class="grip"></i>
    <input class="field num" value="1.00" aria-label="Animation start"><input class="field num" value="1.00" aria-label="Playback start">
    <div class="track"><div class="thumb"><i></i><span>1</span><span class="end">24</span><i></i></div></div>
    <input class="field num" value="24.00" aria-label="Playback end"><input class="field num" value="48.00" aria-label="Animation end">
    <svg class="i10"><use href="#tri"/></svg><button class="combo">No Anim Layer</button>
    <svg class="i10"><use href="#tri"/></svg><button class="combo">No Character Set</button>
    <svg class="i10" viewBox="0 0 16 16"><circle cx="4" cy="8" r="3" fill="none" stroke="#ddd" stroke-width="1.500"/><path d="M7 8h9M14 8v3" stroke="#ddd" stroke-width="1.500"/></svg>
    <svg class="i10 last" viewBox="0 0 16 16"><path d="M0 0h16v16H0z" fill="#f6e8e8"/><path d="M0 0h16v4H0z" fill="#79b5ea"/><path d="M3 6l10 8M13 6L4 12M8 5v9" stroke="#e03838" stroke-width="2"/></svg>
  </div>

  <div class="mel">
    <i class="grip"></i><label for="cmd">MEL</label><input id="cmd" class="field"><output></output>
    <svg class="i10 last" viewBox="0 0 16 16"><path d="M0 1h16v14H0z" fill="#dce4ea"/><path d="M0 1h16v4H0z" fill="#5f9cd8"/><path d="M2 7h12v2H2zM2 11h12v2H2z" fill="#445"/></svg>
  </div>

  <div class="help"><i class="grip"></i><p>Move Tool: Use manipulator to move object(s). Use edit mode to change pivot (INSERT). &nbsp;Ctrl+LMB to move perpendicular.</p></div>

  <footer class="taskbar">
    <button class="orb" aria-label="Start"><svg viewBox="0 0 24 24"><circle cx="12" cy="12" r="12" fill="#2a6ca8"/><path d="M2 9a11 11 0 0120 0c-7 4-13 4-20 0z" fill="#7cb8dc"/><path d="M6 7c2-1 4-1 6 0l-1 5c-2-1-4-1-6 0z" fill="#e8622c"/><path d="M13 7c2 1 4 1 6 0l-1 5c-2 1-4 1-6 0z" fill="#8cc63c"/><path d="M5 13c2-1 4-1 6 0l-1 5c-2-1-4-1-6 0z" fill="#4fa4e8"/><path d="M12 13c2 1 4 1 6 0l-1 5c-2 1-4 1-6 0z" fill="#fad23c"/></svg></button>
    <button class="app-ico" aria-label="Explorer"><svg viewBox="0 0 14 14"><path d="M1 2h5l1 2h6v8H1z" fill="#ecd980"/><path d="M2 7h10v5H2z" fill="#9fd0e8"/><path d="M4 5h6v4H4z" fill="#fbf3c4"/></svg></button>
    <button class="app-ico" aria-label="Media player"><svg viewBox="0 0 14 14"><path d="M1 1h12v12H1z" fill="#a8d0ec"/><circle cx="7" cy="7" r="5" fill="#f08a1c"/><circle cx="7" cy="7" r="3" fill="#fff"/><path d="M6 5v4l3-2z" fill="#e87010"/></svg></button>
    <button class="task act" aria-label="Maya"><svg viewBox="0 0 14 14"><path d="M1 1h12v12H1z" fill="#1c2c30"/><path d="M3 3c5-1 8 3 8 9M4 6c3 0 4 2 4 6M7 3l-3 8" stroke="#d8eaea" fill="none" stroke-width="1.300"/></svg></button>
    <button class="task" aria-label="Recorder"><svg viewBox="0 0 14 14"><path d="M2 1h10v12H2z" fill="#6b88b8"/><path d="M4 1h6v5H4zM4 8h6v5H4z" fill="#d8ecf8"/></svg></button>
    <div class="tray"><svg viewBox="0 0 12 12"><path d="M3 8h6L6 5z" fill="#eee"/></svg><svg viewBox="0 0 12 12"><path d="M2 1v11" stroke="#eee" stroke-width="1.500"/><path d="M3 1h7v6H3z" fill="#eee"/><circle cx="8" cy="8" r="3.500" fill="#d8202c"/><path d="M6.500 6.500l3 3M9.500 6.500l-3 3" stroke="#fff"/></svg><svg viewBox="0 0 12 12"><path d="M1 1h3v4H1zM4 3h7v7H4z" fill="#222" stroke="#eee"/><path d="M4 5l6 6M10 5l-6 6" stroke="#e0202c" stroke-width="2"/></svg><svg viewBox="0 0 12 12"><path d="M1 4h2l4-3v10L3 8H1z" fill="#eee"/><circle cx="8.500" cy="8" r="3.300" fill="#d8202c"/><path d="M7 6.500l3 3M10 6.500l-3 3" stroke="#fff"/></svg><time>3:28 PM</time><i class="peek"></i></div>
  </footer>

  <section class="outliner">
    <div class="o-title"><svg class="i10"><use href="#m"/></svg><h2>Outliner</h2><div class="o-cap"><button aria-label="Minimize"><i class="min"></i></button><button aria-label="Maximize"><i class="max"></i></button><button class="x" aria-label="Close">x</button></div></div>
    <div class="o-body">
      <nav class="menubar"><button>Display</button><button>Show</button><button>Help</button></nav>
      <div class="o-search"><svg viewBox="0 0 12 12"><circle cx="6" cy="6" r="5" fill="none" stroke="#666" stroke-dasharray="3 2"/></svg><input class="field" aria-label="Filter"></div>
      <div class="o-list">
        <ul>
          <li class="dim"><svg><use href="#cam"/></svg>persp</li>
          <li class="dim"><svg><use href="#cam"/></svg>top</li>
          <li class="dim"><svg><use href="#cam"/></svg>front</li>
          <li class="dim"><svg><use href="#cam"/></svg>side</li>
          <li class="plus"><svg><use href="#m-joint"/></svg>joint1</li>
          <li><svg><use href="#ik"/></svg>ikHandle1</li>
          <li class="sel"><svg><use href="#crv-sel"/></svg>curve1</li>
          <li class="minus par"><svg><use href="#file"/></svg>Top_Ctrl_Grp</li>
          <li class="kid"><svg><use href="#crv"/></svg>Top_Ctrl</li>
          <li class="minus par"><svg><use href="#file"/></svg>Butom_Ctrl_Grp</li>
          <li class="kid"><svg><use href="#crv"/></svg>Butom_Ctrl</li>
          <li class="minus par"><svg><use href="#file"/></svg>Middle_Grp</li>
          <li class="plus kid"><svg><use href="#file"/></svg>Middle_Ctrl_Grp</li>
          <li><svg><use href="#set"/></svg>defaultLightSet</li>
          <li><svg><use href="#set"/></svg>defaultObjectSet</li>
        </ul>
        <div class="vbar"><svg viewBox="0 0 10 10"><path d="M2 6h6L5 3z"/></svg><i></i><svg viewBox="0 0 10 10"><path d="M2 6h6L5 3z"/></svg><svg viewBox="0 0 10 10"><path d="M2 4h6L5 7z"/></svg></div>
      </div>
      <div class="hbar"><svg viewBox="0 0 10 10"><path d="M7 2v6L3 5z"/></svg><i></i><svg viewBox="0 0 10 10"><path d="M7 2v6L3 5z"/></svg><svg viewBox="0 0 10 10"><path d="M3 2v6l4-3z"/></svg></div>
      <i class="dots o-grip"></i>
    </div>
  </section>
</div>
<script src="grid.js"></script>
</body>
</html>
```
FILE: styles.css
```css
* { box-sizing: border-box; }
html, body { height: 100%; }
body { margin: 0; background: #000; font: 8px/10px Lato, Roboto, sans-serif; color: #f0f0f0; }
button, input, select { font: inherit; color: inherit; background: none; border: 0; padding: 0; margin: 0; border-radius: 0; }
h1, h2, h3, p, ul, ol { margin: 0; padding: 0; font: inherit; list-style: none; }
svg { display: block; flex: none; }
.sprite { position: absolute; width: 0; height: 0; }
.i10 { width: 10px; height: 10px; }
.app { position: relative; display: flex; flex-direction: column; height: 100vh; min-height: 700px; margin: 0 5%; background: #444; overflow: hidden; }

.titlebar { display: flex; align-items: flex-start; gap: 5px; height: 15px; padding-left: 1px; border-bottom: 1px solid #b9c6d6; color: #182436; background: linear-gradient(90deg, #b9bfdf 0, #cdc8e2 8%, #b4c3ea 15%, #8db3ee 26%, #74a6f0 45%, #5c9bf2 80%, #78a8ec 92%, #a8c0ec 97%, #7ba4e0 100%); }
.titlebar h1 { flex: 1; font: 8px/10px Roboto, sans-serif; }
.caption, .o-cap { display: flex; }
.caption { height: 9px; border: 1px solid #7f98c8; border-top: 0; background: rgba(255,255,255,.15); }
.caption button { display: grid; place-items: center; width: 20px; }
.caption .x { width: 28px; }
.caption svg { width: 8px; height: 7px; }
.min { width: 8px; height: 3px; background: #fff; border: 1px solid #777; }
.max { width: 8px; height: 7px; border: 2px solid #fff; outline: 1px solid #777; }

.menubar { display: flex; gap: 9px; line-height: 12px; padding-left: 5px; }
.main-menu { gap: 8px; height: 13px; border-bottom: 1px solid #303030; line-height: 13px; }
.main-menu button { line-height: 13px; }

.grip { flex: none; width: 4px; margin: 0 2px 0 3px; align-self: stretch; background: radial-gradient(circle, #777 0 .7px, transparent 1px) 0 0 / 3px 4px; }
.sep { flex: none; width: 2px; height: 12px; margin: 0 2px; background: #8a8a8a; border-right: 1px solid #2c2c2c; border-radius: 1px; }
.sep.wide { margin-right: 5px; }
.field { background: #292929; border: 1px solid #343434; border-top-color: #222; min-width: 0; }

.status { display: flex; align-items: center; height: 23px; border-bottom: 1px solid #303030; }
.status select { width: 67px; height: 12px; appearance: none; padding-left: 2px; border: 1px solid #777; background: conic-gradient(from -45deg at 50% 70%, #ddd 25%, transparent 0) right 2px top 3px / 6px 4px no-repeat, #646464; line-height: 10px; margin-bottom: 3px; }
.status button { width: 18px; height: 17px; display: grid; place-items: center; }
.status button svg { width: 14px; height: 14px; }
.status .slim { width: 14px; }
.status .slim svg { width: 12px; height: 12px; }
.status .lock { margin-left: 2px; }
.status .on { background: #5c6670; border: 1px solid #353535; }
.quick { width: 111px; height: 12px; margin-left: 5px; margin-bottom: 3px; }
.status .right { display: flex; margin: 0 2px 0 auto; }

.shelf { display: flex; height: 47px; border-bottom: 1px solid #2c2c2c; padding-top: 2px; }
.shelf-side { display: flex; flex-direction: column; align-items: center; gap: 4px; width: 15px; padding-top: 24px; border: 1px solid #353535; }
.blk { width: 9px; height: 5px; background: #aaa; }
.shelf-side svg { border-top: 1px solid #ccc; }
.shelf-main { flex: 1; display: flex; flex-direction: column; margin: 0 4px 2px 1px; }
.tabs { display: flex; height: 15px; border-bottom: 1px solid #8a8a8a; }
.tabs button { padding: 2px 6px 0 7px; border-right: 1px solid #333; }
.tabs .sel, .layer-tabs .sel { background: #7c7c7c; }
.trash { width: 10px; height: 12px; margin: 2px 0 0 auto; }
.shelf-items { flex: 1; display: flex; padding: 1px 0 0 2px; border: 1px solid #353535; }
.shelf-items button { width: 24px; text-align: left; padding-left: 2px; font: 700 8px/9px "DejaVu Sans Condensed", "DejaVu Sans", sans-serif; color: #fff; white-space: nowrap; }
.shelf-items svg { width: 20px; height: 14px; }
.shelf-items .big { padding: 0; }
.shelf-items .big svg { width: 22px; height: 22px; }

.work { flex: 1 1 0px; display: flex; min-height: 0; }
.dots { height: 5px; background: radial-gradient(circle, #808080 0 .7px, transparent 1px) 0 0 / 4px 3px; }
.toolbox { display: flex; flex-direction: column; width: 32px; padding: 5px 4px 3px 2px; border-right: 1px solid #303030; }
.toolbox .dots { margin-bottom: 2px; }
.tools { flex: 1; border: 1px solid #666; border-top: 0; border-left-color: #333; }
.toolset { display: flex; flex-direction: column; justify-content: space-between; height: 253px; }
.toolset button { width: 24px; height: 23px; border: 1px solid #666; background: #3c3c3c; }
.toolset svg { width: 22px; height: 21px; }
.toolset .sel { background: #f4f0f0; }
.layouts { display: flex; flex-direction: column; gap: 4px; padding: 9px 1px 0; }
.layouts button, .layouts svg { width: 22px; height: 22px; }
.layouts .more { background: #4b4b4b; }
.logo { align-self: center; margin-top: 2px; border: 1px solid #777; }
.logo svg { width: 20px; height: 20px; }

.view { flex: 1; display: flex; flex-direction: column; min-width: 0; padding-top: 4px; }
.view .menubar { gap: 8px; }
.viewbar { display: flex; align-items: center; height: 15px; }
.viewbar svg { width: 12px; height: 11px; margin: 0 1px; }
.viewbar .lit { background: #6a7680; }
.viewbar .dk { background: #1c1c1c; }
.scene { flex: 1; width: 100%; min-height: 0; background: #fee4e4; }
.scene text { font: 700 8px "DejaVu Sans", sans-serif; }
.cam-name { fill: #143c1c; }
.ax-z { fill: #2424c8; }
.ax-y { fill: #30d030; }

.channel { display: flex; flex-direction: column; width: 309px; padding: 5px 2px 1px 8px; }
.dock-title { display: flex; align-items: center; gap: 3px; height: 9px; }
.dock-title h2 { padding: 0 6px; font: 7px/9px Roboto, sans-serif; }
.dock-title .dots { flex: 1; }
.dock-title button { background: #181818; }
.dock-title button svg { width: 8px; height: 8px; }
.chan-icons { display: flex; justify-content: flex-end; gap: 2px; height: 17px; padding-top: 3px; }
.chan-icons svg { width: 12px; height: 12px; }
.channel .menubar { height: 15px; padding-left: 4px; line-height: 14px; }
.chan-box { flex: 1; display: flex; flex-direction: column; border: 1px solid #2c2c2c; border-right-color: #666; border-bottom-color: #666; padding: 1px; }
.chan-box h3 { font: 700 8px/11px "DejaVu Sans", sans-serif; color: #fff; height: 11px; }
.attrs { display: grid; grid-template-columns: 1fr 44px; column-gap: 2px; grid-auto-rows: 11px; padding-right: 1px; text-align: right; line-height: 11px; }
.attrs input { width: 44px; background: #2a2a2a; border-bottom: 1px solid #353535; }
.chan-box .shape { padding-left: 6px; background: #3c3c3c; }
.empty { flex: 1; margin-top: 10px; background: #292929; }
.grip-h { width: 100px; margin: 1px auto 4px; }
.layer-tabs { display: flex; }
.layer-tabs button { height: 12px; padding: 0 7px; border: 1px solid #353535; border-bottom: 0; }
.layer-box { display: flex; flex-direction: column; height: 101px; padding: 0 3px 2px; border: 1px solid #606060; }
.channel .layer-box .menubar { padding-left: 1px; }
.layer-icons { display: flex; justify-content: flex-end; gap: 6px; height: 17px; padding: 1px 1px 0 0; }
.layer-icons svg { width: 12px; height: 12px; }
.layer-list { flex: 1; background: #292929; }
.side-tabs { width: 14px; padding-top: 4px; }
.side-tabs button { display: block; width: 12px; height: 66px; margin-bottom: 2px; writing-mode: vertical-rl; line-height: 12px; border: 1px solid #303030; }
.side-tabs .sel { height: 101px; background: #6e6e6e; }

.time, .range, .mel, .help { flex: none; display: flex; align-items: center; border-bottom: 1px solid #303030; }
.time { height: 27px; border-top: 1px solid #333; }
.ticks { flex: 1; display: flex; height: 21px; margin-left: 1px; padding: 0 4px; background: linear-gradient(#929090, #9c9494); color: #2b2b2b; }
.ticks li { flex: 1; padding-left: 9px; line-height: 9px; background: linear-gradient(#111, #111) 0 100% / 1px 11px no-repeat; }
.ticks .now { background-color: #6c6c6c; }
.ticks b { display: block; color: #fff; line-height: 12px; }
.num { width: 47px; height: 13px; padding-left: 2px; }
.time .num { margin-left: 3px; height: 14px; }
.play { display: flex; justify-content: space-between; width: 146px; margin: 0 6px 0 5px; }
.play svg { width: 14px; height: 10px; fill: #f3e4e4; }
.range { height: 20px; gap: 2px; }
.range .grip { margin-right: 1px; }
.track { flex: 1; height: 14px; padding-left: 5px; background: #242424; border-bottom: 1px solid #777; }
.thumb { display: flex; align-items: center; gap: 5px; width: 50%; height: 12px; padding: 0 2px; background: #7a7a7a; color: #fff; }
.thumb i { width: 7px; height: 8px; border: 1px solid #444; border-width: 0 1px 1px 0; }
.thumb .end { margin-left: auto; }
.combo { width: 72px; height: 13px; padding-left: 3px; text-align: left; background: #484848; }
.last { margin-right: 4px; }
.mel { height: 23px; }
.mel label { width: 32px; padding-left: 8px; }
.mel .field { flex: 1; height: 16px; }
.mel output { flex: 1; height: 16px; margin: 0 1px 0 6px; background: #000; }
.help { height: 17px; border-bottom: 2px solid #aaa; }
.help p { flex: 1; padding: 3px 8px 1px; border: 1px solid #353535; border-bottom: 0; font: 7px/10px Roboto, sans-serif; }

.taskbar { flex: none; display: flex; align-items: center; height: 21px; background: linear-gradient(90deg, #0c0c1c, #14122c 30%, #101024 45%, #0c0c14 62%, #1c0c10 70%, #0e1028 78%, #17204c 92%, #10142c); }
.orb { margin: 0 13px 0 7px; height: 24px; }
.orb svg { width: 24px; height: 24px; }
.app-ico { width: 22px; margin-right: 10px; }
.app-ico svg, .task svg { width: 14px; height: 14px; margin: auto; }
.task { width: 30px; height: 19px; margin-right: 2px; border: 1px solid #77778c; border-radius: 2px; background: linear-gradient(#555564, #22222e); }
.task.act { background: linear-gradient(#d4d4e4, #8c8ca4); }
.app-ico + .task { margin-left: -4px; }
.tray { display: flex; align-items: center; gap: 4px; margin-left: auto; align-self: stretch; }
.tray svg { width: 12px; height: 12px; }
.tray time { padding: 0 8px 0 7px; white-space: nowrap; color: #fff; }
.peek { width: 9px; height: 18px; background: linear-gradient(#8c90b0, #404468); border: 1px solid #9ca0bc; margin-right: 1px; }

.outliner { position: absolute; left: 620px; top: 114px; width: 181px; height: 513px; display: flex; flex-direction: column; padding: 0 5px 7px; border: 1px solid #2a2020; border-radius: 6px; background: linear-gradient(#f7e4e4 0, #ecd6d6 28%, #6c5656 29%, #564848 90%, #8c7474); box-shadow: inset 0 0 0 1px #eadada, 1px 2px 9px 3px rgba(0,0,0,.75); }
.o-title { display: flex; align-items: center; gap: 3px; height: 19px; color: #2c2020; background: linear-gradient(90deg, #f6e4e4 30%, #a89494 48%, #7c6a6a 62%, transparent 90%); }
.o-title h2 { flex: 1; font: 8px/10px Roboto, sans-serif; }
.o-cap { align-self: flex-start; height: 13px; border: 1px solid #554848; border-top: 0; border-radius: 0 0 3px 3px; overflow: hidden; margin-right: -2px; }
.o-cap button { display: grid; place-items: center; width: 19px; background: linear-gradient(#d8c8c8, #847474); border-right: 1px solid #554848; }
.o-cap .x { width: 33px; background: linear-gradient(#f0a090, #e02c18 50%, #e85838); color: #fff; font: 700 10px/9px "DejaVu Sans", sans-serif; border: 0; }
.o-body { flex: 1; display: flex; flex-direction: column; border: 1px solid #1c1c1c; background: #444; min-height: 0; }
.o-body .menubar { height: 14px; line-height: 13px; padding-left: 4px; }
.o-search { display: flex; align-items: center; gap: 5px; height: 14px; padding-left: 1px; }
.o-search svg { width: 12px; height: 12px; }
.o-search .field { flex: 1; height: 12px; }
.o-list { flex: 1; display: flex; margin-top: 4px; background: #292929; }
.o-list ul { flex: 1; display: grid; grid-auto-rows: 1fr; height: 206px; }
.o-list li { position: relative; display: flex; align-items: center; padding-left: 30px; gap: 7px; }
.o-list li svg { width: 12px; height: 12px; }
.o-list .dim { color: #6c6c6c; }
.o-list .sel { background: #78b8f8; color: #d4eaff; }
.o-list .kid { gap: 21px; }
.plus::before, .minus::before { content: ""; position: absolute; left: 1px; top: 3px; width: 8px; height: 8px; border: 1px solid #ddd; background: linear-gradient(#ddd, #ddd) center / 4px 1px no-repeat; }
.plus::before { background: linear-gradient(#ddd, #ddd) center / 4px 1px no-repeat, linear-gradient(#ddd, #ddd) center / 1px 4px no-repeat; }
.par::after, .kid::after { content: ""; position: absolute; left: 43px; top: 5px; width: 4px; height: 4px; border: 1px solid #ddd; border-radius: 50%; }
.kid::after { left: 44px; top: -5px; width: 16px; height: 15px; border: 0; border-radius: 0; background: linear-gradient(#ddd, #ddd) 0 0 / 1px 12px no-repeat, linear-gradient(#ddd, #ddd) 0 12px / 12px 1px no-repeat, radial-gradient(circle, transparent 0 1px, #ddd 1px 2px, transparent 2px) 12px 10px / 4px 5px no-repeat; }
.vbar { display: flex; flex-direction: column; width: 11px; background: #242424; border-left: 1px solid #3a3a3a; }
.vbar svg, .hbar svg { width: 10px; height: 10px; fill: #fff; }
.vbar i, .hbar i { flex: 1; background: #2b2b2b; }
.hbar { display: flex; height: 11px; padding-right: 12px; background: #292929; border-top: 1px solid #222; }
.o-grip { width: 54px; height: 3px; margin: 1px auto; }
```
FILE: grid.js
```js
// Perspective ground plane: 24 x 24 cells, s runs across, t runs towards the back.
function project(s, t) {
  const w = 1 + 0.2825 * t;
  return [(505 + 218 * s + 161.9 * t) / w, (537.5 + 9 * s + 62.7 * t) / w];
}
function segment(a, b) {
  return "M" + a.map(n => n.toFixed(1)) + "L" + b.map(n => n.toFixed(1));
}
let d = "";
for (let i = -12; i <= 12; i++) {
  const k = i / 12;
  d += segment(project(k, -1), project(k, 1)) + segment(project(-1, k), project(1, k));
}
document.getElementById("floor").setAttribute("d", d);
```
